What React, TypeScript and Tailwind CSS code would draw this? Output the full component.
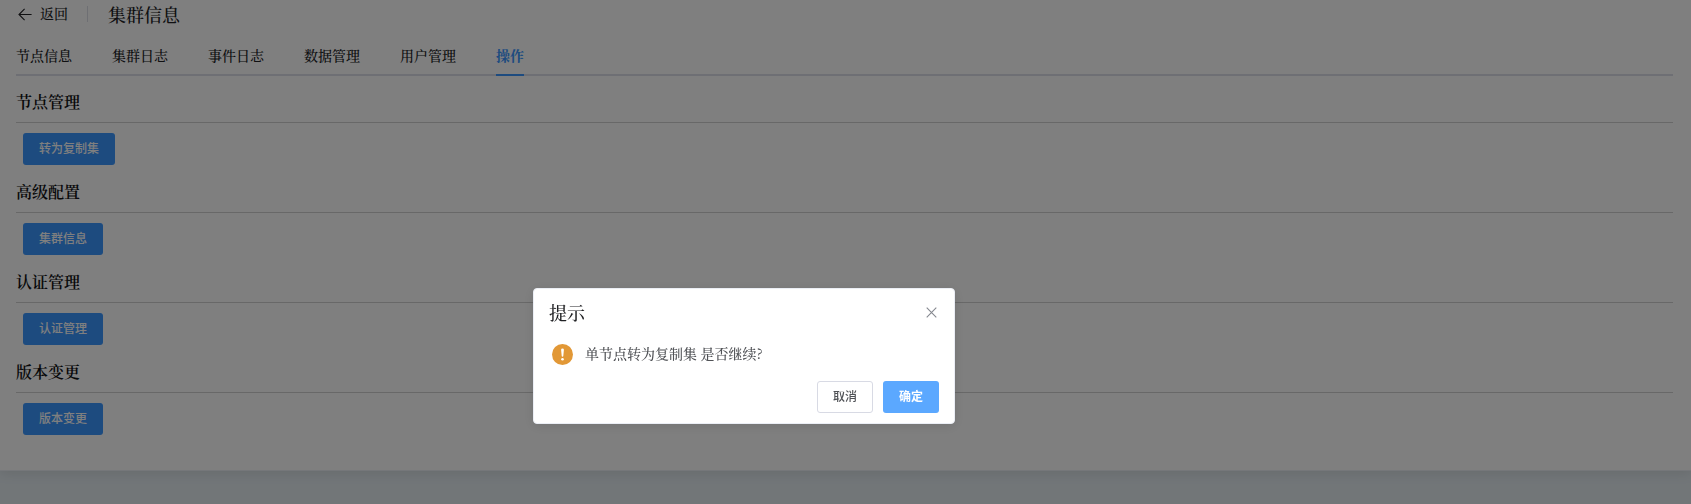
import React from "react";

const serif =
  "font-['Songti_SC','Noto_Serif_CJK_SC','Noto_Serif_SC','Noto_Sans_CJK_SC',serif]";
const sans = "font-['Noto_Sans_CJK_SC',sans-serif]";

const tabs = ["节点信息", "集群日志", "事件日志", "数据管理", "用户管理", "操作"];

const sections = [
  { title: "节点管理", action: "转为复制集" },
  { title: "高级配置", action: "集群信息" },
  { title: "认证管理", action: "认证管理" },
  { title: "版本变更", action: "版本变更" },
];

function PageHeader() {
  return (
    <header className="flex h-7 items-center font-medium text-[#202124]">
      <svg className="ml-[2px] h-[13px] w-[14px]" viewBox="0 0 14 13" fill="none" stroke="currentColor" strokeWidth="1.1">
        <path d="M13.6 6.5H1M6.6 0.9L1 6.5L6.6 12.1" />
      </svg>
      <span className="ml-2 h-7 text-sm leading-[26px]">返回</span>
      <span className="ml-[19px] h-4 w-px bg-[#dcdfe6]" />
      <h1 className="ml-5 h-7 text-lg leading-7">集群信息</h1>
    </header>
  );
}

function Tabs() {
  return (
    <nav className="mt-2 flex h-10 gap-10 border-b-2 border-[#dcdee8] text-sm font-medium leading-[38px] text-[#202124]">
      {tabs.map((tab) => (
        <a
          key={tab}
          className={
            tab === "操作"
              ? "h-10 border-b-2 border-[#3a96ff] font-bold text-[#3a96ff]"
              : "h-10"
          }
        >
          {tab}
        </a>
      ))}
    </nav>
  );
}

function Section({ title, action }: { title: string; action: string }) {
  return (
    <section className="h-[90px]">
      <h2 className="h-[42px] border-b border-[#d0d0d0] text-base font-semibold leading-[41px] text-[#101113]">
        {title}
      </h2>
      <button
        className={`${sans} ml-[7px] mt-2.5 block h-8 rounded-[3px] bg-[#3a96ff] px-4 pb-0.5 text-xs font-medium text-white`}
      >
        {action}
      </button>
    </section>
  );
}

function ConfirmDialog() {
  return (
    <div className="fixed inset-0 flex items-start bg-black/50 pl-[533px] pt-[288px]">
      <div className="flex h-[136px] w-[422px] flex-col rounded border border-[#ebeef5] bg-white px-[15px] shadow-[0_2px_12px_rgba(0,0,0,0.1)]">
        <div className="mt-[11px] flex h-6 items-center justify-between text-lg font-medium leading-6 text-[#202124]">
          <span>提示</span>
          <svg className="mr-[2px] h-[11px] w-[11px]" viewBox="0 0 11 11" stroke="#85888f" strokeWidth="1.1">
            <path d="M0.7 0.7L10.3 10.3M10.3 0.7L0.7 10.3" />
          </svg>
        </div>
        <div className="mt-[18px] flex h-6 items-center text-sm font-medium leading-6 text-[#505256]">
          <svg className="ml-[2.5px] mr-[12.5px] h-[21px] w-[21px]" viewBox="0 0 21 21">
            <circle cx="10.5" cy="10.5" r="10.5" fill="#e29836" />
            <path d="M9.1 5.8a1.4 1.4 0 0 1 2.8 0L11.3 12a.8.8 0 0 1-1.6 0Z" fill="white" />
            <circle cx="10.5" cy="15.3" r="1.3" fill="white" />
          </svg>
          <p className="-mt-0.5">单节点转为复制集 是否继续?</p>
        </div>
        <div className={`${sans} mt-[15px] flex justify-end gap-2.5 text-xs font-medium`}>
          <button className="h-8 w-14 rounded-[3px] border border-[#d8dae4] bg-white pb-0.5 text-[#505256]">
            取消
          </button>
          <button className="h-8 w-14 rounded-[3px] bg-[#5ba8ff] pb-0.5 font-semibold text-white">确定</button>
        </div>
      </div>
    </div>
  );
}

export default function App() {
  return (
    <div className={`${serif} h-[504px] overflow-hidden bg-[#e4ecf1]`}>
      <main className="h-[471px] border-b border-[#ebeef5] bg-white pl-4 pr-[18px] shadow-[0_2px_12px_rgba(0,0,0,0.1)]">
        <PageHeader />
        <Tabs />
        <div className="pt-[5px]">
          {sections.map((section) => (
            <Section key={section.title} {...section} />
          ))}
        </div>
      </main>
      <ConfirmDialog />
    </div>
  );
}
